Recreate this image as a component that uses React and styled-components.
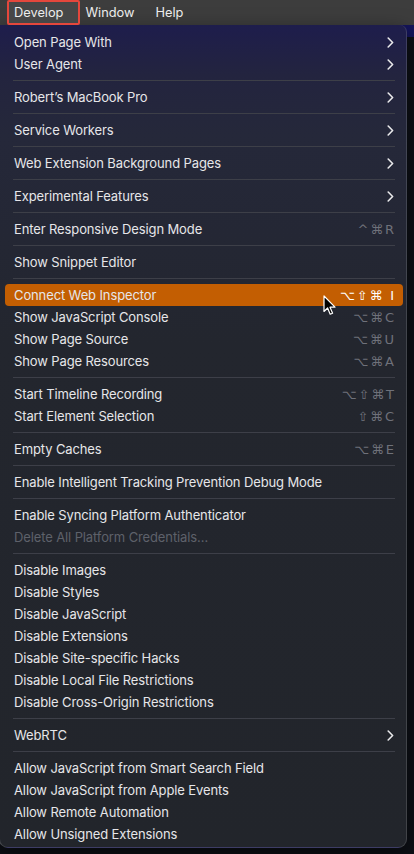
import React from "react";
import styled, { createGlobalStyle } from "styled-components";

const Global = createGlobalStyle`
  html, body { margin: 0; padding: 0; background: #0e1118; }
  body { font-family: Inter, "Noto Sans", "DejaVu Sans", sans-serif; -webkit-font-smoothing: antialiased; }
  #root { width: 414px; height: 854px; overflow: hidden; }
`;

const Screen = styled.div`
  position: relative;
  width: 414px;
  height: 854px;
  overflow: hidden;
  display: flex;
  flex-direction: column;
  background: #0e1118;
`;

const MenuBar = styled.div`
  height: 25px;
  flex: none;
  display: flex;
  align-items: center;
  padding-left: 7px;
  background: #3d3d3d;
  color: #ececec;
  font-size: 12.8px;
`;

const BarItem = styled.div`
  height: 25px;
  box-sizing: border-box;
  display: flex;
  align-items: center;
  padding: 0 ${(p) => p.$pr}px 0 ${(p) => p.$pl}px;
  border: ${(p) => (p.$boxed ? "2px solid #e5473c" : "none")};
  border-radius: ${(p) => (p.$boxed ? "2px" : "0")};
  background: ${(p) => (p.$boxed ? "#474747" : "transparent")};
  position: relative;
  z-index: 3;
`;

const Editor = styled.div`
  flex: 1;
  background: linear-gradient(to bottom, #15155c 0px, #15155c 12px, #0d1016 12px, #0d1016 100%);
`;

const Menu = styled.div`
  position: absolute;
  top: 25px;
  left: -1px;
  width: 408px;
  height: 823px;
  box-sizing: border-box;
  padding: 6px 3px 4px 5px;
  border: 1px solid rgba(255, 255, 255, 0.14);
  border-top: none;
  border-radius: 0 7px 9px 9px;
  background: linear-gradient(
    to bottom,
    #1e1d4c 0px,
    #23243f 50px,
    #25283a 110px,
    #23262e 320px,
    #22252b 100%
  );
  box-shadow: 0 6px 20px rgba(0, 0, 0, 0.5);
  display: flex;
  flex-direction: column;
  z-index: 2;
`;

const Item = styled.div`
  height: 22px;
  flex: none;
  display: flex;
  align-items: center;
  padding: 0 9px 0 9px;
  border-radius: 4px;
  font-size: 13px;
  letter-spacing: -0.12px;
  color: ${(p) => (p.$disabled ? "#5e616a" : "#e6e6e9")};
  background: ${(p) => (p.$active ? "#c35e02" : "transparent")};
`;

const Label = styled.span`
  flex: 1;
  white-space: nowrap;
`;

const Keys = styled.span`
  color: ${(p) => (p.$active ? "#ffffff" : "#6f717a")};
  font-family: "DejaVu Sans", sans-serif;
  font-size: 13px;
  letter-spacing: 1.8px;
  margin-right: -1.8px;
  white-space: pre;
`;

const Sep = styled.div`
  height: 11px;
  flex: none;
  display: flex;
  align-items: center;
  padding: 0 8px 0 8px;
  &::after {
    content: "";
    flex: 1;
    height: 1px;
    background: #3d3f48;
  }
`;

const Pointer = styled.svg`
  position: absolute;
  left: 323px;
  top: 295px;
  z-index: 5;
`;

const Chevron = () => (
  <svg width="7" height="11" viewBox="0 0 7 11">
    <polyline points="1.2,1 5.6,5.5 1.2,10" fill="none" stroke="#e8e8ea" strokeWidth="1.6" strokeLinecap="round" strokeLinejoin="round" />
  </svg>
);

const groups = [
  [{ t: "Open Page With", sub: true }, { t: "User Agent", sub: true }],
  [{ t: "Robert’s MacBook Pro", sub: true }],
  [{ t: "Service Workers", sub: true }],
  [{ t: "Web Extension Background Pages", sub: true }],
  [{ t: "Experimental Features", sub: true }],
  [{ t: "Enter Responsive Design Mode", k: "^⌘R" }],
  [{ t: "Show Snippet Editor" }],
  [
    { t: "Connect Web Inspector", k: "⌥⇧⌘ I", active: true },
    { t: "Show JavaScript Console", k: "⌥⌘C" },
    { t: "Show Page Source", k: "⌥⌘U" },
    { t: "Show Page Resources", k: "⌥⌘A" },
  ],
  [
    { t: "Start Timeline Recording", k: "⌥⇧⌘T" },
    { t: "Start Element Selection", k: "⇧⌘C" },
  ],
  [{ t: "Empty Caches", k: "⌥⌘E" }],
  [{ t: "Enable Intelligent Tracking Prevention Debug Mode" }],
  [
    { t: "Enable Syncing Platform Authenticator" },
    { t: "Delete All Platform Credentials…", disabled: true },
  ],
  [
    { t: "Disable Images" },
    { t: "Disable Styles" },
    { t: "Disable JavaScript" },
    { t: "Disable Extensions" },
    { t: "Disable Site-specific Hacks" },
    { t: "Disable Local File Restrictions" },
    { t: "Disable Cross-Origin Restrictions" },
  ],
  [{ t: "WebRTC", sub: true }],
  [
    { t: "Allow JavaScript from Smart Search Field" },
    { t: "Allow JavaScript from Apple Events" },
    { t: "Allow Remote Automation" },
    { t: "Allow Unsigned Extensions" },
  ],
];

export default function App() {
  return (
    <>
      <Global />
      <Screen>
        <MenuBar>
          <BarItem $boxed $pl={5} $pr={15}>Develop</BarItem>
          <BarItem $pl={5} $pr={11}>Window</BarItem>
          <BarItem $pl={10} $pr={11}>Help</BarItem>
        </MenuBar>
        <Editor />
        <Menu>
          {groups.map((g, gi) => (
            <React.Fragment key={gi}>
              {gi > 0 && <Sep />}
              {g.map((it) => (
                <Item key={it.t} $active={it.active} $disabled={it.disabled}>
                  <Label>{it.t}</Label>
                  {it.sub && <Chevron />}
                  {it.k && <Keys $active={it.active}>{it.k}</Keys>}
                </Item>
              ))}
            </React.Fragment>
          ))}
        </Menu>
        <Pointer width="14" height="21" viewBox="0 0 14 21">
          <path d="M1 1 L1 16.5 L4.6 13 L7.2 19.2 L9.6 18.2 L7 12.2 L12 12.2 Z" fill="#000" stroke="#fff" strokeWidth="1.2" strokeLinejoin="round" />
        </Pointer>
      </Screen>
    </>
  );
}
